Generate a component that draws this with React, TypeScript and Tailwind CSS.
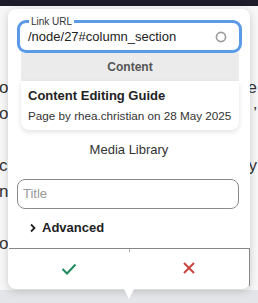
import React from 'react';

const font = { fontFamily: '"Liberation Sans", Arial, sans-serif' };

const bgLines: { left: string; right: string; top: string }[] = [
    { left: 'ol', right: 'e', top: 'mt-[74px]' },
    { left: 'o', right: '\u2019', top: 'mt-[10px]' },
    { left: '', right: '', top: 'mt-[10px]' },
    { left: 'c', right: 'y', top: 'mt-[10px]' },
    { left: 'n', right: '', top: 'mt-[10px]' },
    { left: '', right: '', top: 'mt-[10px]' },
    { left: 'o', right: '', top: 'mt-[10px]' },
];

const App: React.FC = () => {
    return (
        <div className="relative w-[258px] h-[303px] overflow-hidden bg-[#f7f7f8] text-[#222]" style={font}>
            {/* editor chrome behind the popover */}
            <div className="h-[6px] bg-[#1d1d29]" />
            <div className="flex flex-col">
                {bgLines.map((l, i) => (
                    <div key={i} className={`${l.top} flex justify-between h-[16px] text-[17px] leading-[16px] text-[#333]`}>
                        <span className="-ml-[1px]">{l.left}</span>
                        <span className="mr-[1px]">{l.right}</span>
                    </div>
                ))}
            </div>
            <div className="absolute left-0 right-0 bottom-0 h-[13px] bg-[#e4e5e8]" />

            {/* link popover */}
            <div className="absolute left-[8px] top-[9px] w-[242px] h-[280px] bg-white rounded-lg shadow-[0_2px_8px_rgba(0,0,0,0.18)] flex flex-col">
                <div className="relative ml-[9px] mt-[11px] w-[225px] h-[33px] border-[3px] border-[#5a9ae6] rounded-[9px] flex items-center pl-[8px] pr-[12px] z-10 bg-white">
                    <span className="absolute left-[9px] -top-[7px] px-[2px] bg-white text-[10px] leading-[11px] text-[#333]">Link URL</span>
                    <span className="flex-1 text-[13px] text-[#222]">/node/27#column_section</span>
                    <svg width="12" height="12" viewBox="0 0 12 12">
                        <circle cx="6" cy="6" r="4.6" fill="none" stroke="#9a9a9a" strokeWidth="1.6" />
                    </svg>
                </div>
                <div className="ml-[13px] w-[218px] flex flex-col">
                    <div className="h-[28px] bg-[#ebebeb] flex items-center justify-center text-[12px] font-bold text-[#555]">Content</div>
                    <div className="h-[49px] bg-white rounded-b-lg shadow-[0_2px_5px_rgba(0,0,0,0.12)] px-[7px] flex flex-col justify-center gap-[6px]">
                        <div className="text-[13px] leading-[15px] font-bold text-[#222]">Content Editing Guide</div>
                        <div className="text-[11.7px] leading-[14px] text-[#333]">Page by rhea.christian on 28 May 2025</div>
                    </div>
                </div>
                <div className="mt-[12px] text-center text-[13px] leading-[16px] text-[#333]">Media Library</div>
                <div className="ml-[9px] mt-[21px] w-[222px] h-[30px] border border-[#8a8a8a] rounded-lg flex items-center px-[5px] text-[13px] text-[#999]">Title</div>
                <div className="mt-[11px] ml-[21px] h-[16px] flex items-center gap-[5px] text-[13px] font-bold text-[#222]">
                    <svg width="8" height="10" viewBox="0 0 8 10">
                        <path d="M2 1.5 L5.5 5 L2 8.5" fill="none" stroke="#222" strokeWidth="1.8" />
                    </svg>
                    <span>Advanced</span>
                </div>
                <div className="mt-[12px] ml-[1px] flex border-t border-[#888] h-[40px]">
                    <div className="flex-1 flex items-center justify-center">
                        <svg width="16" height="12" viewBox="0 0 16 12">
                            <path d="M1.5 6 L6 10.5 L14.5 1.5" fill="none" stroke="#1f8a5e" strokeWidth="2" />
                        </svg>
                    </div>
                    <div className="w-px h-[3px] bg-[#aaa]" />
                    <div className="flex-1 flex items-center justify-center border-r border-[#888] mb-[2px]">
                        <svg width="12" height="12" viewBox="0 0 12 12">
                            <path d="M1 1 L11 11 M11 1 L1 11" fill="none" stroke="#c9453f" strokeWidth="2" />
                        </svg>
                    </div>
                </div>
                <div className="absolute left-[116px] -bottom-[10px] w-0 h-0 border-l-[5px] border-r-[5px] border-t-[10px] border-l-transparent border-r-transparent border-t-white" />
            </div>
        </div>
    );
};

export default App;
